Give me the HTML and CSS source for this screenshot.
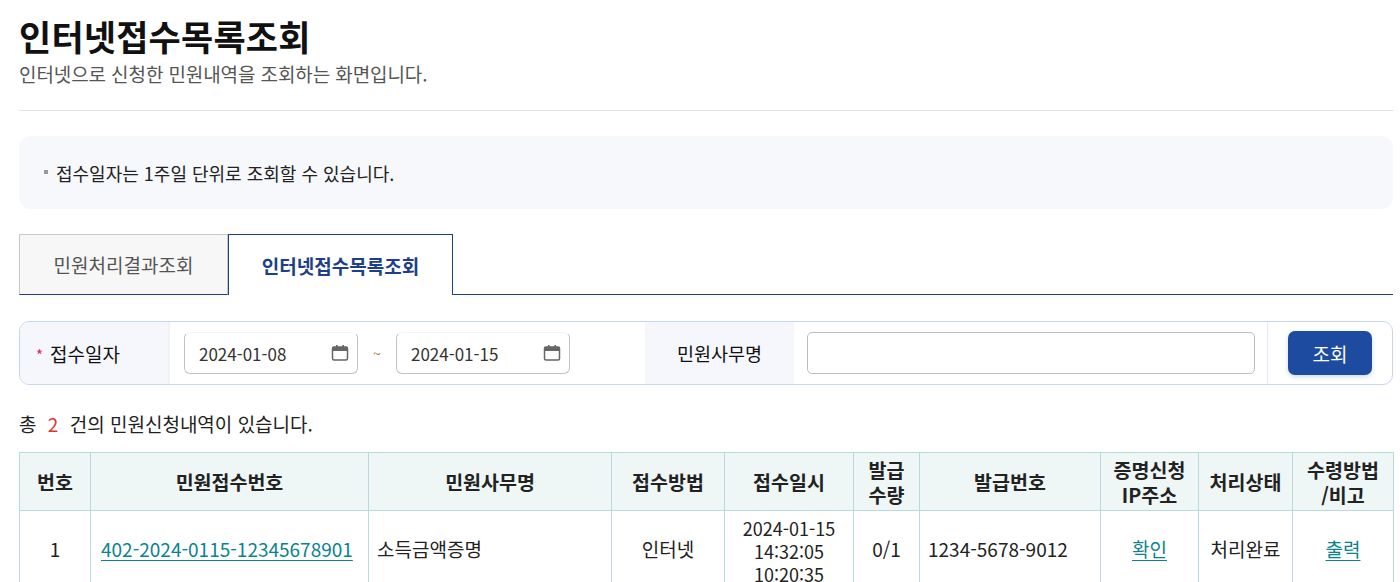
FILE: index.html
```html
<!DOCTYPE html>
<html lang="ko">
<head>
<meta charset="utf-8">
<title>인터넷접수목록조회</title>
<link rel="stylesheet" href="styles.css">
</head>
<body>
<div class="page">
  <header class="head">
    <h1 class="title">인터넷접수목록조회</h1>
    <p class="subtitle">인터넷으로 신청한 민원내역을 조회하는 화면입니다.</p>
  </header>

  <div class="notice">
    <span class="dot"></span>
    <span>접수일자는 1주일 단위로 조회할 수 있습니다.</span>
  </div>

  <div class="tabs">
    <div class="tab">민원처리결과조회</div>
    <div class="tab active">인터넷접수목록조회</div>
    <div class="tab-fill"></div>
  </div>

  <div class="search">
    <div class="label"><span class="req">*</span>접수일자</div>
    <div class="dates">
      <div class="date">
        <span class="dtext">2024-01-08</span>
        <svg class="cal" width="18" height="18" viewBox="0 0 18 18"><rect x="1.5" y="3" width="15" height="13" rx="1.5" fill="none" stroke="#666" stroke-width="1.5"/><rect x="1.5" y="3" width="15" height="4" fill="#666"/><rect x="5" y="1" width="1.6" height="4" fill="#666"/><rect x="11.4" y="1" width="1.6" height="4" fill="#666"/></svg>
      </div>
      <span class="tilde">~</span>
      <div class="date">
        <span class="dtext">2024-01-15</span>
        <svg class="cal" width="18" height="18" viewBox="0 0 18 18"><rect x="1.5" y="3" width="15" height="13" rx="1.5" fill="none" stroke="#666" stroke-width="1.5"/><rect x="1.5" y="3" width="15" height="4" fill="#666"/><rect x="5" y="1" width="1.6" height="4" fill="#666"/><rect x="11.4" y="1" width="1.6" height="4" fill="#666"/></svg>
      </div>
    </div>
    <div class="label label2">민원사무명</div>
    <div class="namecell"><input class="nameinput" type="text"></div>
    <div class="btncell"><button class="btn" type="button">조회</button></div>
  </div>

  <p class="count">총 <em>2</em> 건의 민원신청내역이 있습니다.</p>

  <table class="grid">
    <colgroup>
      <col style="width:71px"><col style="width:278px"><col style="width:243px"><col style="width:113px"><col style="width:129px"><col style="width:66px"><col style="width:181px"><col style="width:98px"><col style="width:94px"><col style="width:101px">
    </colgroup>
    <thead>
      <tr>
        <th>번호</th><th>민원접수번호</th><th>민원사무명</th><th>접수방법</th><th>접수일시</th><th>발급<br>수량</th><th>발급번호</th><th>증명신청<br>IP주소</th><th>처리상태</th><th>수령방법<br>/비고</th>
      </tr>
    </thead>
    <tbody>
      <tr>
        <td>1</td>
        <td class="left link-cell"><a href="#">402-2024-0115-12345678901</a></td>
        <td class="left">소득금액증명</td>
        <td>인터넷</td>
        <td class="dt">2024-01-15<br>14:32:05<br>10:20:35</td>
        <td>0/1</td>
        <td class="left">1234-5678-9012</td>
        <td><a href="#">확인</a></td>
        <td>처리완료</td>
        <td><a href="#">출력</a></td>
      </tr>
    </tbody>
  </table>
</div>
</body>
</html>
```
FILE: styles.css
```css
* { box-sizing: border-box; }
html, body { margin: 0; padding: 0; background: #fff; }
body {
  font-family: "Noto Sans CJK KR", "Noto Sans", "Liberation Sans", sans-serif;
  color: #222;
  overflow: hidden;
}
.page {
  width: 1374px;
  margin-left: 19px;
}
.head {
  padding-top: 12px;
  padding-bottom: 22px;
  border-bottom: 1px solid #e2e2e2;
}
.title {
  margin: 0;
  font-size: 35px;
  line-height: 48px;
  font-weight: 700;
  color: #111;
  letter-spacing: 0.2px;
}
.subtitle {
  margin: 0;
  font-size: 19px;
  line-height: 28px;
  color: #555;
  letter-spacing: -0.1px;
}
.notice {
  margin-top: 25px;
  height: 73px;
  background: #f6f8fc;
  border-radius: 12px;
  display: flex;
  align-items: center;
  gap: 8px;
  padding-left: 25px;
  font-size: 18px;
  color: #222;
}
.dot {
  width: 4px;
  height: 4px;
  background: #999;
  margin-top: -2px;
}
.tabs {
  margin-top: 25px;
  display: flex;
  height: 61px;
}
.tab {
  width: 209px;
  display: flex;
  align-items: center;
  justify-content: center;
  background: #f7f7f7;
  border: 1px solid #c8c8c8;
  border-bottom: 1px solid #1d3f8a;
  font-size: 19px;
  color: #555;
}
.tab.active {
  width: 225px;
  background: #fff;
  border: 1px solid #1d3f8a;
  border-bottom: none;
  color: #1d3f8a;
  font-weight: 700;
}
.tab-fill {
  flex: 1;
  border-bottom: 1px solid #1d3f8a;
}
.search {
  margin-top: 26px;
  height: 64px;
  border: 1px solid #c7d6ef;
  border-radius: 10px;
  display: flex;
  overflow: hidden;
}
.label {
  width: 148px;
  background: #f5f7fd;
  display: flex;
  align-items: center;
  padding-left: 16px;
  font-size: 19px;
  color: #111;
}
.req {
  color: #e0245e;
  font-size: 15px;
  margin-right: 7px;
  margin-top: 2px;
}
.dates {
  width: 477px;
  display: flex;
  align-items: center;
  padding-left: 14px;
  border-left: 2px solid #f0f2f7;
}
.date {
  width: 174px;
  height: 42px;
  border: 1px solid #c2c2c2;
  border-top-color: #f4f4f4;
  border-radius: 6px;
  display: flex;
  align-items: center;
  justify-content: space-between;
  padding: 0 8px 0 14px;
  font-size: 17px;
  color: #333;
}
.tilde {
  width: 38px;
  text-align: center;
  color: #8a6a3e;
  font-size: 14px;
}
.label2 {
  width: 149px;
  justify-content: center;
  padding-left: 0;
  font-size: 18.5px;
}
.namecell {
  width: 474px;
  display: flex;
  align-items: center;
  padding-left: 13px;
  padding-right: 12px;
  border-right: 1px solid #e2e8f3;
}
.nameinput {
  width: 449px;
  height: 42px;
  border: 1px solid #bdbdbd;
  border-radius: 5px;
  background: #fff;
  font-family: inherit;
  font-size: 16px;
}
.btncell {
  flex: 1;
  display: flex;
  align-items: center;
  padding-left: 20px;
}
.btn {
  width: 84px;
  height: 44px;
  background: #1d4ba0;
  border: none;
  border-radius: 7px;
  color: #fff;
  font-family: inherit;
  font-size: 19px;
  box-shadow: 0 2px 5px rgba(29, 75, 160, 0.2);
}
.count {
  margin: 0;
  margin-top: 25px;
  font-size: 19px;
  line-height: 28px;
  color: #222;
}
.count em {
  font-style: normal;
  color: #e5312f;
  margin: 0 6px;
}
.grid {
  margin-top: 14px;
  width: 1374px;
  border-collapse: collapse;
  table-layout: fixed;
  font-size: 19px;
}
.grid th {
  background: #eef7f6;
  border: 1px solid #b9d9dc;
  height: 58px;
  font-size: 19.5px;
  font-weight: 700;
  color: #222;
  line-height: 25px;
  padding: 0;
}
.grid td {
  border: 1px solid #b9d9dc;
  border-top: none;
  height: 72px;
  text-align: center;
  color: #222;
  padding: 0 8px;
  white-space: nowrap;
}
.grid td.left { text-align: left; }
.grid td.link-cell { padding-left: 10px; }
.grid td.dt { line-height: 23px; padding: 6px 0 0; font-size: 18px; }
.grid a {
  color: #0a838f;
  text-decoration: underline;
  text-underline-offset: 3px;
}
```
